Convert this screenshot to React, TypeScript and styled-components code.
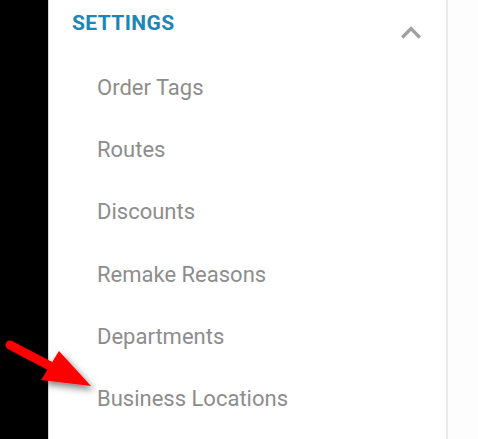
import styled, { createGlobalStyle } from 'styled-components'

const GlobalStyle = createGlobalStyle`
  html, body {
    margin: 0;
    padding: 0;
    background: #ffffff;
  }
  body {
    font-family: Roboto, 'Liberation Sans', sans-serif;
  }
`

const items = ['Order Tags', 'Routes', 'Discounts', 'Remake Reasons', 'Departments', 'Business Locations']

const App = () => {
  return (
    <Page>
      <GlobalStyle />
      <SideRail />
      <Menu>
        <SectionHeader>
          <SectionTitle>SETTINGS</SectionTitle>
          <Chevron viewBox="0 0 24 24" aria-hidden>
            <path d="M12 8l-6 6 1.41 1.41L12 10.83l4.59 4.58L18 14z" />
          </Chevron>
        </SectionHeader>
        <ItemList>
          {items.map((item) => (
            <Item key={item}>{item}</Item>
          ))}
        </ItemList>
      </Menu>
      <Divider />
      <Rest />
      <Pointer viewBox="0 0 100 60" aria-hidden>
        <defs>
          <filter id="arrow-shadow" x="-30%" y="-30%" width="160%" height="160%">
            <feDropShadow dx="3" dy="4" stdDeviation="3.5" floodColor="#000" floodOpacity="0.5" />
          </filter>
        </defs>
        <g filter="url(#arrow-shadow)" fill="#ff0000">
          <line x1="10" y1="10" x2="52" y2="32" stroke="#ff0000" strokeWidth="9" strokeLinecap="round" />
          <polygon points="59,16 41,45 91,51" />
        </g>
      </Pointer>
    </Page>
  )
}

const Page = styled.div`
  position: relative;
  display: flex;
  width: 478px;
  height: 439px;
  overflow: hidden;
  background: #ffffff;
`

const SideRail = styled.div`
  width: 48px;
  flex-shrink: 0;
  background: #000000;
  border-right: 1px solid #d8d8d8;
`

const Menu = styled.nav`
  width: 397px;
  flex-shrink: 0;
  display: flex;
  flex-direction: column;
  background: #ffffff;
`

const SectionHeader = styled.div`
  position: relative;
  display: flex;
  align-items: center;
  height: 46px;
  padding-left: 23px;
`

const SectionTitle = styled.h3`
  margin: 0;
  font-size: 21px;
  font-weight: 700;
  letter-spacing: 0.4px;
  color: #1c86b6;
`

const Chevron = styled.svg`
  position: absolute;
  left: 342px;
  top: 13px;
  width: 40px;
  height: 40px;
  fill: #a0a0a0;
`

const ItemList = styled.ul`
  list-style: none;
  margin: 0;
  padding: 0;
`

const Item = styled.li`
  height: 62.3px;
  display: flex;
  align-items: center;
  padding-left: 48px;
  font-size: 22px;
  color: #8d8d8d;
  &:first-child {
    margin-top: 10px;
  }
`

const Divider = styled.div`
  width: 2px;
  flex-shrink: 0;
  background: #ebebeb;
`

const Rest = styled.div`
  flex: 1;
  background: #fdfdfd;
`

const Pointer = styled.svg`
  position: absolute;
  left: 0;
  top: 335px;
  width: 100px;
  height: 60px;
  overflow: visible;
`

export default App
